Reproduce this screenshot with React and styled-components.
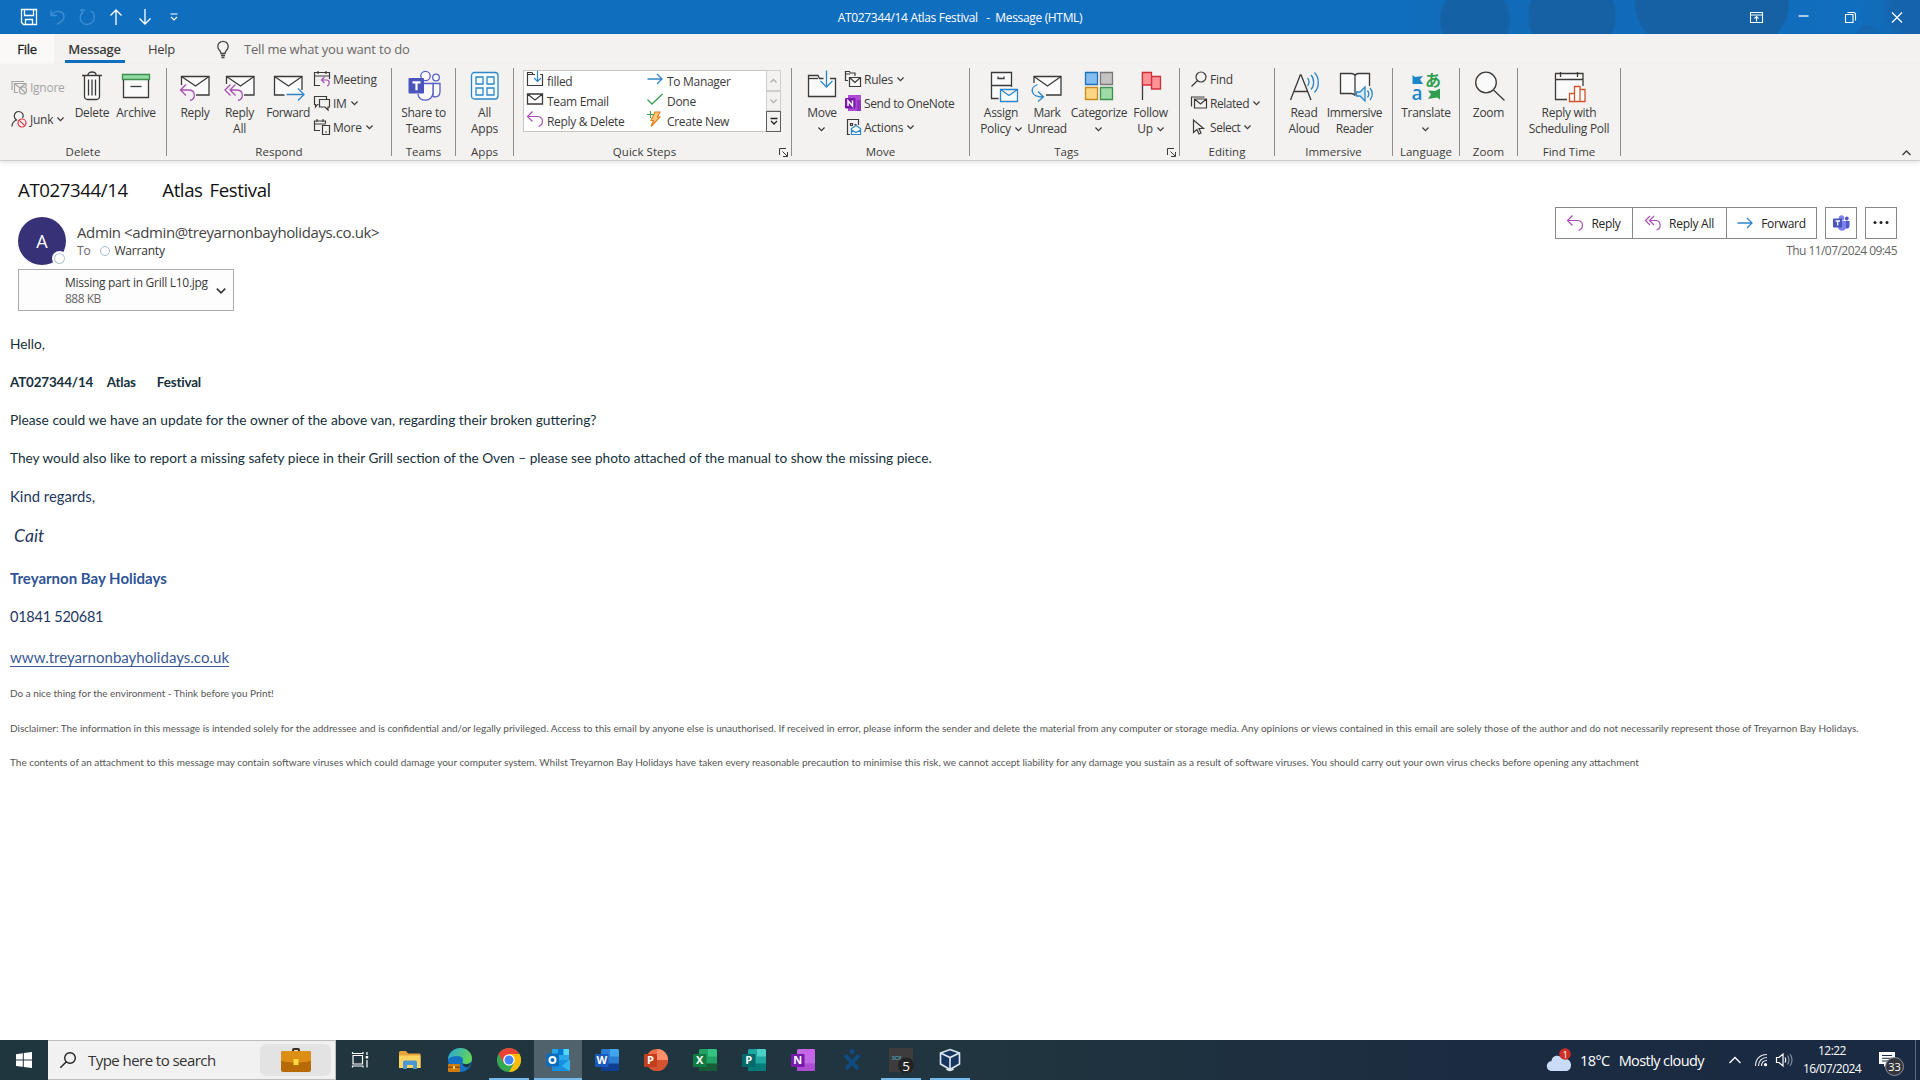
import React from 'react'
import styled, { createGlobalStyle } from 'styled-components'

const GlobalStyle = createGlobalStyle`
  * {
    box-sizing: border-box;
  }
  html, body {
    margin: 0;
    padding: 0;
    overflow: hidden;
  }
  body {
    font-family: 'Open Sans', 'Noto Sans', sans-serif;
    font-size: 12px;
    color: #3b3a39;
    background: #fff;
  }
  svg {
    display: block;
    overflow: visible;
    flex: none;
  }
`

const S = {
  Window: styled.div`
    width: 1920px;
    height: 1080px;
    display: flex;
    flex-direction: column;
    background: #fff;
  `,

  // title bar
  TitleBar: styled.header`
    height: 34px;
    display: grid;
    grid-template-columns: 1fr 300px 1fr;
    align-items: center;
    color: #fff;
    background:
      radial-gradient(circle at 1475px 20px, #1561a6 0 34px, transparent 36px),
      radial-gradient(circle at 1572px 16px, #1561a4 0 42px, transparent 45px),
      radial-gradient(ellipse 78px 56px at 1712px 4px, #1561a3 0 97%, transparent 100%),
      radial-gradient(circle at 1868px 38px, #1566b0 0 12px, transparent 14px),
      radial-gradient(circle at 1912px 10px, #1564ab 0 20px, transparent 30px),
      linear-gradient(90deg, #106ebe 0 1400px, #126ab8 1500px, #106ebe 1860px, #1465ae 1920px);
  `,
  QuickAccess: styled.div`
    display: flex;
    align-items: center;
    gap: 13px;
    padding-left: 21px;
  `,
  WindowTitle: styled.div`
    text-align: center;
    white-space: pre;
    letter-spacing: -0.33px;
  `,
  WindowButtons: styled.div`
    display: flex;
    justify-content: flex-end;
    align-items: center;
    gap: 33px;
    padding-right: 16px;
  `,

  // tabs
  Tabs: styled.nav`
    height: 30px;
    display: flex;
    background: #f3f2f1;
    font-size: 13px;
    letter-spacing: -0.3px;
  `,
  Tab: styled.div`
    width: ${(p) => p.$width}px;
    display: flex;
    flex-direction: column;
    align-items: center;
    line-height: 31px;
    color: ${(p) => (p.$file ? '#201f1e' : '#3b3a39')};
    background: ${(p) => (p.$file ? '#faf9f8' : 'none')};
    font-weight: ${(p) => (p.$active ? 600 : 400)};
    -webkit-text-stroke: ${(p) => (p.$file ? '0.3px #201f1e' : '0')};
    &::after {
      content: '';
      display: ${(p) => (p.$active ? 'block' : 'none')};
      width: 60px;
      height: 3px;
      margin-top: -5px;
      background: #106ebe;
    }
  `,
  TellMe: styled.div`
    display: flex;
    align-items: center;
    gap: 15px;
    padding-left: 29px;
    color: #6a6866;
    letter-spacing: -0.2px;
  `,

  // ribbon
  Ribbon: styled.section`
    height: 97px;
    display: flex;
    align-items: flex-start;
    padding-top: 4px;
    background: #f3f2f1;
    border-bottom: 1px solid #cfcdcb;
    box-shadow: 0 2px 4px rgba(0, 0, 0, 0.1);
  `,
  Group: styled.div`
    position: relative;
    width: ${(p) => p.$width}px;
    height: 88px;
    display: flex;
    flex-direction: column;
    border-right: 1px solid #8f8d8b;
  `,
  GroupBody: styled.div`
    flex: none;
    height: 76px;
    display: flex;
    justify-content: ${(p) => (p.$center ? 'center' : 'flex-start')};
    padding-left: ${(p) => p.$pad || 0}px;
  `,
  GroupLabel: styled.div`
    flex: none;
    text-align: center;
    font-size: 11.5px;
    line-height: 16px;
    letter-spacing: 0.05px;
    padding-right: ${(p) => (p.$launcher ? 16 : 0)}px;
  `,
  Launcher: styled.span`
    position: absolute;
    right: 3px;
    bottom: -1px;
  `,
  Big: styled.div`
    width: ${(p) => p.$width}px;
    display: flex;
    flex-direction: column;
    align-items: center;
    padding-top: 2px;
  `,
  BigLabel: styled.div`
    margin-top: 3px;
    text-align: center;
    white-space: nowrap;
    line-height: 16px;
    letter-spacing: ${(p) => p.$ls ?? -0.27}px;
  `,
  Line: styled.div`
    height: 16px;
    display: flex;
    align-items: center;
    justify-content: center;
    gap: 4px;
  `,
  Column: styled.div`
    width: ${(p) => p.$width}px;
    display: flex;
    flex-direction: column;
    margin-top: -1px;
    padding-top: ${(p) => p.$top || 0}px;
  `,
  Small: styled.div`
    height: ${(p) => p.$height || 24}px;
    display: flex;
    align-items: center;
    gap: 3px;
    white-space: nowrap;
    letter-spacing: ${(p) => p.$ls ?? -0.25}px;
    color: ${(p) => (p.$disabled ? '#a6a4a2' : 'inherit')};
    & > svg:last-child {
      margin-left: 1px;
    }
  `,
  Gallery: styled.div`
    width: 258px;
    height: 62px;
    margin-top: 2px;
    display: flex;
    background: #fff;
    border: 1px solid #c8c6c4;
  `,
  Steps: styled.div`
    flex: 1;
    display: grid;
    grid-template-columns: 120px 1fr;
    grid-auto-rows: 20px;
    padding-left: 3px;
  `,
  Step: styled.div`
    display: flex;
    align-items: center;
    gap: 4px;
    letter-spacing: -0.3px;
    white-space: nowrap;
    & > svg {
      margin-top: -4px;
    }
    & > span {
      padding-top: 1px;
    }
  `,
  Scroller: styled.div`
    width: 15px;
    margin: -1px;
    display: grid;
    grid-template-rows: 21px 20px 21px;
  `,
  ScrollButton: styled.div`
    display: flex;
    align-items: center;
    justify-content: center;
    background: #f3f2f1;
    border: 1px solid ${(p) => (p.$on ? '#605e5c' : '#d0cecc')};
  `,
  Collapse: styled.div`
    flex: 1;
    height: 93px;
    display: flex;
    align-items: flex-end;
    justify-content: flex-end;
    padding: 0 9px 5px 0;
  `,

  // message header
  Header: styled.section`
    display: flex;
    justify-content: space-between;
    padding: 16px 23px 0 18px;
  `,
  Subject: styled.h1`
    margin: 0;
    font-size: 18.67px;
    font-weight: 400;
    line-height: 26px;
    letter-spacing: -0.42px;
    word-spacing: 2.5px;
    color: #111;
    white-space: pre;
  `,
  Sender: styled.div`
    display: flex;
    gap: 11px;
    margin-top: 14px;
  `,
  Avatar: styled.div`
    position: relative;
    width: 48px;
    height: 48px;
    display: flex;
    align-items: center;
    justify-content: center;
    border-radius: 50%;
    font-size: 18px;
    color: #fff;
    background: #373277;
  `,
  Presence: styled.span`
    position: absolute;
    right: -1px;
    bottom: -1px;
    width: 15px;
    height: 15px;
    border: 2px solid #fff;
    border-radius: 50%;
    background: #fff;
    box-shadow: inset 0 0 0 1px #a3bcc9;
  `,
  From: styled.div`
    font-size: 15px;
    line-height: 20px;
    padding-top: 5px;
    letter-spacing: -0.39px;
    white-space: nowrap;
    color: #444;
  `,
  To: styled.div`
    display: flex;
    align-items: center;
    line-height: 18px;
    letter-spacing: -0.2px;
    color: #666;
  `,
  Ring: styled.i`
    width: 10px;
    height: 10px;
    margin: 0 4px 0 10px;
    border: 1px solid #a3bcc9;
    border-radius: 50%;
  `,
  Recipient: styled.span`
    color: #333;
  `,
  Attachment: styled.div`
    width: 216px;
    height: 42px;
    margin-top: 4px;
    display: flex;
    align-items: center;
    justify-content: space-between;
    padding: 1px 7px 0 46px;
    line-height: 16px;
    letter-spacing: -0.28px;
    white-space: nowrap;
    background: #fdfdfd;
    border: 1px solid #ababab;
  `,
  FileSize: styled.div`
    color: #666;
    letter-spacing: -0.5px;
  `,
  Actions: styled.div`
    display: flex;
    flex-direction: column;
    align-items: flex-end;
    padding-top: 30px;
  `,
  ActionRow: styled.div`
    display: flex;
    height: 32px;
    letter-spacing: -0.28px;
    color: #252423;
  `,
  Action: styled.div`
    width: ${(p) => p.$width}px;
    display: flex;
    align-items: center;
    justify-content: center;
    gap: 8px;
    border: 1px solid #8a8886;
    margin-left: ${(p) => p.$gap ?? -1}px;
    white-space: nowrap;
  `,
  Date: styled.div`
    margin-top: 3px;
    line-height: 18px;
    letter-spacing: -0.55px;
    color: #666;
  `,

  // message body
  Body: styled.article`
    flex: 1;
    padding: 23px 10px 0;
    font-family: Lato, 'Open Sans', sans-serif;
    white-space: pre;
  `,
  P: styled.p`
    margin: 0;
    height: ${(p) => p.$height || 38}px;
    line-height: 20px;
    font-size: ${(p) => p.$size || 13.7}px;
    font-weight: ${(p) => (p.$bold ? 700 : 400)};
    font-style: ${(p) => (p.$italic ? 'italic' : 'normal')};
    letter-spacing: ${(p) => p.$ls || 0}px;
    word-spacing: ${(p) => p.$ws || 0}px;
    color: ${(p) => p.$color || '#16303c'};
  `,
  Link: styled.a`
    color: #3a5a96;
    text-decoration: underline;
    text-underline-offset: 3px;
  `,

  // taskbar
  Taskbar: styled.footer`
    height: 40px;
    display: flex;
    color: #fff;
    background: linear-gradient(90deg, #20363f 0, #20353f 980px, #1b2b41 1500px, #1a2a42 1920px);
  `,
  Start: styled.div`
    width: 48px;
    display: flex;
    align-items: center;
    justify-content: center;
  `,
  Search: styled.div`
    width: 288px;
    display: flex;
    align-items: center;
    gap: 12px;
    padding: 0 4px 0 12px;
    font-size: 15px;
    letter-spacing: -0.55px;
    color: #333;
    background: #f1f1f1;
    border: 1px solid #bdbdbd;
    border-left: 0;
  `,
  Highlight: styled.div`
    width: 71px;
    height: 32px;
    margin-left: auto;
    display: flex;
    justify-content: center;
    border-radius: 7px;
    background: #e3e3e3;
  `,
  Task: styled.div`
    width: ${(p) => p.$width || 49}px;
    display: flex;
    flex-direction: column;
    align-items: center;
    padding-top: 8px;
    background: ${(p) => (p.$active ? '#50626b' : 'none')};
    &::after {
      content: '';
      display: ${(p) => (p.$running ? 'block' : 'none')};
      width: ${(p) => (p.$active ? 48 : 40)}px;
      height: 2px;
      margin-top: 6px;
      background: #76b9ed;
    }
  `,
  Tray: styled.div`
    flex: 1;
    display: flex;
    align-items: center;
    justify-content: flex-end;
    padding-right: 4px;
  `,
  Weather: styled.div`
    display: flex;
    align-items: center;
    gap: 9px;
    font-size: 14.5px;
    letter-spacing: -0.58px;
    margin-right: 25px;
    white-space: nowrap;
  `,
  TrayIcons: styled.div`
    display: flex;
    align-items: center;
    gap: 8px;
    & > svg:first-child {
      margin-right: 5px;
    }
  `,
  Clock: styled.div`
    width: 74px;
    margin: 0 2px 0 3px;
    text-align: center;
    line-height: 18px;
    letter-spacing: -0.55px;
  `,
  Notice: styled.div`
    width: 45px;
    height: 40px;
    border-right: 1px solid #5c6b7c;
    padding: 11px 0 0 8px;
  `,
}

const INK = '#3b3a39'
const BLUE = '#2e86c8'
const PURPLE = '#a94fb5'

const Icon = ({ w = 32, h = w, s = INK, sw = 1.3, children }) => (
  <svg width={w} height={h} viewBox={`0 0 ${w} ${h}`} fill="none" stroke={s} strokeWidth={sw}>
    {children}
  </svg>
)

const Chevron = ({ c = INK, w = 7 }) => (
  <svg width={w} height={w / 2 + 1} viewBox="0 0 8 5" fill="none" stroke={c} strokeWidth="1.4">
    <path d="M0.5 0.5 4 4 7.5 0.5" />
  </svg>
)

/* big ribbon icons */
const Trash = () => (
  <Icon>
    <path d="M8.5 5.5v21a3 3 0 0 0 3 3h9a3 3 0 0 0 3-3v-21" fill="#fafafa" />
    <path d="M6 5.5h20M12 5c0-4 8-4 8 0M12.5 9.5v16M16 9.5v16M19.5 9.5v16" />
  </Icon>
)
const Archive = () => (
  <Icon>
    <path d="M3.5 9.5v18h25v-18" fill="#fafafa" />
    <path d="M2.5 4.5h27v5h-27z" fill="#92dba0" stroke="#3f8f50" />
    <path d="M10.5 16.5h11" />
  </Icon>
)
const Reply = () => (
  <Icon>
    <path d="M2.5 15V6.500h27.500v18.500H17" fill="#fafafa" />
    <path d="M2.500 6.500 16.500 16 30 6.500" />
    <path d="M7 14.500 1.500 20 7 25.500M2 20h7.500c7.500 0 7.500 9 1.500 10.500" stroke={PURPLE} />
  </Icon>
)
const ReplyAll = () => (
  <Icon>
    <path d="M2.500 14V6.500h27.500v18.500H20" fill="#fafafa" />
    <path d="M2.500 6.500 16.500 16 30 6.500" />
    <path d="M6.500 14.500 1 20l5.500 5.500M11.500 14.500 6 20l5.500 5.500M6.500 20h6c7.500 0 7.500 9 1.500 10.500" stroke={PURPLE} />
  </Icon>
)
const Forward = () => (
  <Icon>
    <path d="M12.500 25h-10V6.500H30V20" fill="#fafafa" />
    <path d="M2.500 6.500 16.500 16 30 6.500" />
    <path d="M14.500 24.500H32M26 18.500l6 6-6 6" stroke={BLUE} />
  </Icon>
)
const Teams = () => (
  <Icon s="#5b5fc7">
    <circle cx="17.500" cy="6" r="4.700" fill="#fafafa" />
    <circle cx="28" cy="7.500" r="3.300" fill="#fafafa" />
    <path d="M25 13.500h7v8.500c0 4-3 5.500-7 4.500z" fill="#fafafa" />
    <path d="M11.500 13.500H25v9c0 10-15 10-15 1.500" fill="#fafafa" />
    <rect x="0.500" y="8" width="15.500" height="15.500" rx="1" fill="#4b53bc" stroke="none" />
    <path d="M4.500 12.300h8M8.500 12.300v8" stroke="#fff" strokeWidth="2.200" />
  </Icon>
)
const Apps = () => (
  <Icon s={BLUE}>
    <rect x="2.500" y="2.500" width="26.500" height="26.500" rx="3" fill="#f5fbff" />
    <path d="M7 7h7v7H7zM18 7h7v7h-7zM7 18h7v7H7zM18 18h7v7h-7z" />
  </Icon>
)
const Move = () => (
  <Icon>
    <path d="M17.500 8.500h-4l-1.500-3H2.500v21h27v-18H24" fill="#fafafa" />
    <path d="M2.500 8.500H12" />
    <path d="M20.500 0.500V17M14.500 11l6 6 6-6" stroke={BLUE} />
  </Icon>
)
const Assign = () => (
  <Icon>
    <path d="M13.500 28.500h-7v-26h20V17" fill="#fafafa" />
    <path d="M6.500 15.500h20M13 6.500v2h6v-2" />
    <path d="M15.500 19.500h17v12h-17zl8.500 6 8.500-6" fill="#f5fbff" stroke={BLUE} />
  </Icon>
)
const Unread = () => (
  <Icon>
    <path d="M3 13V6.500h27v18.500H15" fill="#fafafa" />
    <path d="M3 6.500 16.500 16 30 6.500" />
    <path d="M6.500 14.500c-8 3-7.500 12.500 5.500 12.500M7 21.500l5.500 5.500-5.500 4.500" stroke={BLUE} />
  </Icon>
)
const Categorize = () => (
  <Icon>
    <path d="M2.500 2.500h12v12h-12z" fill="#84bdf0" stroke="#1f72b8" />
    <path d="M17.500 2.500h12v12h-12z" fill="#c5c3c1" stroke="#7a7876" />
    <path d="M2.500 17.500h12v12h-12z" fill="#fbd684" stroke="#c98a1c" />
    <path d="M17.500 17.500h12v12h-12z" fill="#9fdba5" stroke="#3f9150" />
  </Icon>
)
const Flag = () => (
  <Icon>
    <path d="M7.500 30V2.500" />
    <path d="M16.500 6.500h9v12.500h-9z" fill="#ff9297" stroke="#cf3038" />
    <path d="M7.500 2.500h9v12.500h-9z" fill="#ff9297" stroke="#cf3038" />
  </Icon>
)
const ReadAloud = () => (
  <Icon>
    <path d="M2.500 30 12.300 5h.8L23 30M6 21.500h13.500" />
    <path d="M19.500 8c2 2 2 6 0 8M23 5c3.500 3.500 3.500 11 0 14.500M26.500 2.500c5 5 5 15 0 20" stroke={BLUE} />
  </Icon>
)
const Immersive = () => (
  <Icon>
    <path d="M16 25.500c-1-1.500-2-2-4-2H1.500v-20H12c2 0 4 1 4 3 0-2 2-3 4-3h10.500V16" fill="#fafafa" />
    <path d="M16 6.500v19" />
    <path d="M17.500 22h3.500l5-5v14l-5-5h-3.500z" fill="#d6ecfb" stroke={BLUE} />
    <path d="M28.500 20.500c1.500 2 1.500 5 0 7M31 18c3 3.500 3 8.500 0 12" stroke={BLUE} />
  </Icon>
)
const Translate = () => (
  <Icon>
    <path d="M2.500 5 5 7l8-1-3 3.500 3 4.500H2.500z" fill="#1b87c9" stroke="none" />
    <path d="M30 18.500v11l-3-2-9 1.500 3-4.500-3-4 7 .5z" fill="#2f9e4f" stroke="none" />
    <text x="15" y="16" fontSize="16" fontWeight="700" fontFamily="'Noto Sans CJK JP', sans-serif" fill="#2f9e4f" stroke="none">あ</text>
    <text x="1.500" y="30" fontSize="19" fontWeight="600" fontFamily="'Open Sans', sans-serif" fill="#1b87c9" stroke="none">a</text>
  </Icon>
)
const ZoomGlass = () => (
  <Icon>
    <circle cx="13" cy="12.500" r="10.300" fill="#fafafa" />
    <path d="M20.500 20 31.500 30.500" />
  </Icon>
)
const Poll = () => (
  <Icon>
    <path d="M14 29.500H2.500v-26H30V16" fill="#fafafa" />
    <path d="M2.500 9.500H30M7.500 2v5M24.500 2v5" />
    <path d="M16.500 31.500v-8h5v8zM21.500 31.500v-15h5.500v15zM27 31.500v-12h5v12z" fill="#fff" stroke="#d2532a" />
  </Icon>
)

/* small ribbon icons */
const Ignore = () => (
  <Icon w={16} s="#a6a4a2" sw={1.2}>
    <path d="M7 13.500H3.500V4.500h11.500V8M3.500 4.500 9 9l5-4M1 11V2.500h12" />
    <circle cx="12" cy="11.500" r="3.500" />
    <path d="m9.500 9 5 5" />
  </Icon>
)
const Junk = () => (
  <Icon w={16} sw={1.2}>
    <path d="M1 15.500c0-4 2-5.500 4.500-6.500C1.500 6 3.500.5 7.500.5c4 0 6 4 4 6.500" />
    <circle cx="11" cy="12" r="4" stroke="#d9363e" />
    <path d="m8.300 9.300 5.400 5.400" stroke="#d9363e" />
  </Icon>
)
const Meeting = () => (
  <Icon w={16} sw={1.2}>
    <path d="M6 14.500H.5v-13h15V8M.5 5h15M4 0v3M12 0v3" />
    <path d="m10.500 6-3 3 3 3M8 9h4.500c3.500 0 3.500 5 .5 6" stroke={PURPLE} />
  </Icon>
)
const Chat = () => (
  <Icon w={16} sw={1.2}>
    <path d="M4.500 9.500H3.500L1.500 12V9.500h-1v-8h12V4" />
    <path d="M5.500 4.500h10v7.500H14v3L11 12H5.500z" />
  </Icon>
)
const MoreIcon = () => (
  <Icon w={16} sw={1.2}>
    <path d="M6 11.500H.5V2h11v2.500M.5 5h11M3 0v3M9 0v3M8.500 6.500h7v9h-7zM11 13h2" />
  </Icon>
)
const Rules = () => (
  <Icon w={16} sw={1.2}>
    <path d="M3 9.500H.5v-9h4l1 1.500H10V5M.5 3H5" />
    <path d="M4.500 6.500h11v9h-11zl5.500 5 5.500-5" fill="#fafafa" />
  </Icon>
)
const OneNoteSmall = () => (
  <Icon w={16}>
    <rect x="3" y="0" width="13" height="16" fill="#ae4bd5" stroke="none" />
    <rect x="12" y="5" width="4" height="11" fill="#9332bf" stroke="none" />
    <rect x="0" y="3" width="10.500" height="10.500" rx="1" fill="#7719aa" stroke="none" />
    <path d="M3 11V5.800l4.500 5.200V5.500" stroke="#fff" strokeWidth="1.500" />
  </Icon>
)
const ActionsIcon = () => (
  <Icon w={16} sw={1.2}>
    <path d="M5 15.500H2.500V.5h11V6M5.500 4.500h2v2h-2zM9.500 5.500h2" />
    <path d="M6.500 15.500h9v-6L11 6.500 6.500 9.500zM6.500 11l4.500 2.500 4.500-2.500" fill="#f5fbff" stroke={BLUE} />
  </Icon>
)
const Find = () => (
  <Icon w={16} sw={1.2}>
    <circle cx="10" cy="6" r="5" />
    <path d="M6.500 9.500.5 15.500" />
  </Icon>
)
const Related = () => (
  <Icon w={16} sw={1.2}>
    <path d="M3.500 4h12v9h-12zL9.500 9l6-5M.5 11.500V2h13" />
  </Icon>
)
const Select = () => (
  <Icon w={16} sw={1.2}>
    <path d="M2.500 1v12.500L6 10.500l2 4.500 2-1-2-4.500h4.500z" />
  </Icon>
)
const FolderStep = () => (
  <Icon w={16} sw={1.2}>
    <path d="M8 3.500H6l-1-2H.5v13h15v-11H13M.5 3.500H6" />
    <path d="M10.500 0v10.500M7 7l3.500 3.500L14 7" stroke={BLUE} />
  </Icon>
)
const MailStep = () => (
  <Icon w={16} sw={1.3}>
    <path d="M.5 3h15v10H.5zL8 9l7.500-6" />
  </Icon>
)
const ReplyArrow = () => (
  <Icon w={16} s={PURPLE} sw={1.2}>
    <path d="M5.500.5.5 5.500l5 5M1 5.500h9c7 0 7 8 1.500 10" />
  </Icon>
)
const ReplyAllArrow = () => (
  <Icon w={16} s={PURPLE} sw={1.2}>
    <path d="M5 1 .5 5.500 5 10M9 1 4.500 5.500 9 10M5 5.500h5.500c6 0 6 8 1 9.500" />
  </Icon>
)
const RightArrow = () => (
  <Icon w={16} s={BLUE} sw={1.3}>
    <path d="M.5 8h14.500M10 3l5 5-5 5" />
  </Icon>
)
const Check = () => (
  <Icon w={16} s="#3d9a50" sw={1.3}>
    <path d="M.5 8.500 5 13 15.500 3" />
  </Icon>
)
const Bolt = () => (
  <Icon w={16} s="#e07b1a" sw={1.1}>
    <path d="M8 1h5L10.500 6H13L4 15.500l2.500-6H4z" fill="#fbc97a" />
    <path d="M3.500 0v7M0 3.500h7" stroke="#3d9a50" />
  </Icon>
)

const Corner = () => (
  <Icon w={9} sw={1}>
    <path d="M.5 7V.5H7M3.500 3.500l4.500 4.500M8.500 4v4.500H4" />
  </Icon>
)

/* taskbar icons */
const OfficeTile = ({ letter, light, mid, dark, box }) => (
  <Icon w={24}>
    <g stroke="none">
      <rect x="6" y="1" width="18" height="22" rx="1.500" fill={mid} />
      <path d="M15 1h7.500Q24 1 24 2.500v6h-9z" fill={light} />
      <path d="M6 15.500h18v6q0 1.500-1.500 1.500h-15Q6 23 6 21.500z" fill={dark} />
      <rect x="0" y="6" width="13.500" height="13" rx="1" fill={box} />
      <text x="6.700" y="16.300" textAnchor="middle" fontSize="11" fontWeight="700" fill="#fff">{letter}</text>
    </g>
  </Icon>
)
const Explorer = () => (
  <Icon w={24}>
    <g stroke="none">
      <path d="M1 4.500Q1 3 2.500 3H8l2 2.500h11.500q1 0 1 1V20H1z" fill="#e8a33d" />
      <path d="M1 7.500h21.500V20H1z" fill="#fcd462" />
      <path d="M5 21v-7q0-1.500 1.500-1.500h11q1.500 0 1.500 1.500v7h-4v-4H9v4z" fill="#4a98d6" />
    </g>
  </Icon>
)
const Edge = () => (
  <Icon w={24}>
    <defs>
      <linearGradient id="edge" x1="0" y1="0" x2="1" y2="0.300">
        <stop offset="0" stopColor="#2aa7e0" />
        <stop offset="1" stopColor="#5fd35a" />
      </linearGradient>
    </defs>
    <g stroke="none">
      <circle cx="12" cy="12" r="12" fill="#1571c4" />
      <path d="M0 11C1 3.500 7 0 12.500 0 19 0 24 5 24 10.500c0 3.500-2.500 5.500-6 5.500-2.500 0-4-1-3.500-2 1.500-2 0-6-5-6-4 0-7.500 1-9.500 3z" fill="url(#edge)" />
      <path d="M14.500 15.500c3.500 1.500 7 .5 9.500-1.500-1.500 2-2 3.500-3.500 5-2.500 1-5.500-.5-6-3.500z" fill="#20363f" />
      <rect x="0" y="16" width="12" height="8" rx="1" fill="#d07c0e" />
      <path d="M0 18.500h12v1.500H0z" fill="#8f4d05" />
      <path d="M5 18h2v3H5z" fill="#ffd24a" />
    </g>
  </Icon>
)
const Chrome = () => (
  <Icon w={24}>
    <g stroke="none">
      <circle cx="12" cy="12" r="12" fill="#34a853" />
      <path d="M1.600 6A12 12 0 0 1 22.400 6H12l-5.200 9z" fill="#ea4335" />
      <path d="M22.400 6A12 12 0 0 1 12 24l5.200-9L12 6z" fill="#fbbc05" />
      <circle cx="12" cy="12" r="5.800" fill="#fff" />
      <circle cx="12" cy="12" r="4.500" fill="#4285f4" />
    </g>
  </Icon>
)
const Outlook = () => (
  <Icon w={24}>
    <g stroke="none">
      <rect x="6" y="1" width="17" height="14" rx="1" fill="#28a8ea" />
      <path d="M12 1h5.500v6H12z" fill="#0078d4" />
      <path d="M17.500 1H22q1 0 1 1v5h-5.500z" fill="#50d9ff" />
      <path d="M6 12h18v10q0 1-1 1H7q-1 0-1-1z" fill="#1490df" />
      <path d="M24 11.500 9 23h13.500q1.500 0 1.500-1.500z" fill="#35b8f1" />
      <path d="M6 12l17.500 11H7.500Q6 23 6 21.500z" fill="#1a8fdd" />
      <rect x="0" y="5.500" width="13" height="13" rx="1" fill="#0f6cbd" />
    </g>
    <circle cx="6.500" cy="12" r="3" stroke="#fff" strokeWidth="2" />
  </Icon>
)
const PowerPoint = () => (
  <Icon w={24}>
    <g stroke="none">
      <circle cx="13" cy="12" r="11" fill="#ed6c47" />
      <path d="M13 1a11 11 0 0 1 11 11H13z" fill="#ff8f6b" />
      <path d="M2 12h22a11 11 0 0 1-22 0z" fill="#d35230" />
      <rect x="0" y="6" width="13" height="13" rx="1" fill="#c43e1c" />
      <text x="6.500" y="16.300" textAnchor="middle" fontSize="11" fontWeight="700" fill="#fff">P</text>
    </g>
  </Icon>
)
const Crossed = () => (
  <Icon w={24} s="#114a80" sw={4}>
    <path d="M5 7l13 14M19 7 6 21" />
    <circle cx="12" cy="3.500" r="2.500" fill="#114a80" stroke="none" />
  </Icon>
)
const Badge = () => (
  <Icon w={24}>
    <g stroke="none">
      <rect width="24" height="24" fill="#3e3c3c" />
      <text x="2.500" y="12" fontSize="6" fontWeight="700" letterSpacing="-0.5" fill="#4a93a8">3CX</text>
      <circle cx="17" cy="17.500" r="8" fill="#242424" />
      <text x="17" y="22.500" textAnchor="middle" fontSize="13.500" fill="#fff">5</text>
    </g>
  </Icon>
)
const Cube = () => (
  <Icon w={24} s="#dfe8f2" sw={1.6}>
    <path d="M12 1.500 21.500 5v11L12 21.500 2.500 16V5z" fill="#16365f" />
    <path d="M2.500 5 12 9.500 21.500 5M12 9.500v12" />
    <path d="M8.500 21q3.500 3 7 0" />
  </Icon>
)
const TaskView = () => (
  <Icon w={24} s="#fff" sw={1.2}>
    <path d="M4 7.500h9.500v8.500H4zM3.500 4v1.500H14V4M3.500 19.500V18H14v1.500M18 4v3M18 12v7.500" />
    <path d="M16.700 8h2.500v2.500h-2.500z" fill="#fff" stroke="none" />
  </Icon>
)

const Label = ({ lines, drop, ls }) => (
  <S.BigLabel $ls={ls}>
    {lines.map((line, i) => (
      <S.Line key={line}>
        {line}
        {drop && i === lines.length - 1 && <Chevron />}
      </S.Line>
    ))}
  </S.BigLabel>
)

const BigButton = ({ icon, width, lines, drop, ls }) => (
  <S.Big $width={width}>
    {icon}
    <Label lines={lines} drop={drop} ls={ls} />
  </S.Big>
)

const SmallButton = ({ icon, text, drop, disabled, height, ls }) => (
  <S.Small $height={height} $disabled={disabled} $ls={ls}>
    {icon}
    <span>{text}</span>
    {drop && <Chevron />}
  </S.Small>
)

const Group = ({ width, label, pad, center, launcher, children }) => (
  <S.Group $width={width}>
    <S.GroupBody $pad={pad} $center={center}>{children}</S.GroupBody>
    <S.GroupLabel $launcher={launcher}>{label}</S.GroupLabel>
    {launcher && <S.Launcher><Corner /></S.Launcher>}
  </S.Group>
)

const steps = [
  [<FolderStep />, 'filled'],
  [<RightArrow />, 'To Manager'],
  [<MailStep />, 'Team Email'],
  [<Check />, 'Done'],
  [<ReplyArrow />, 'Reply & Delete'],
  [<Bolt />, 'Create New'],
]

const TitleBar = () => (
  <S.TitleBar>
    <S.QuickAccess>
      <Icon w={16} s="#fff"><path d="M.5.5h15v15h-13l-2-2zM3.500.5v6h9v-6M4.500 15.500v-5h7v5" /></Icon>
      <Icon w={16} s="#3f8fd4"><path d="M1 1v5.500h6M1.500 6C6 0 14 2 14 8c0 4-4 5-7 7.500" /></Icon>
      <Icon w={16} s="#3f8fd4"><path d="M3 1v4.500M1 1h5M4 3C-1 7 1 15 8 15.500 16 15 18 5 11.500 2" /></Icon>
      <Icon w={16} s="#fff"><path d="M8 16V1M2.500 6.500 8 1l5.500 5.500" /></Icon>
      <Icon w={16} s="#fff"><path d="M8 0v15M2.500 9.500 8 15l5.500-5.500" /></Icon>
      <Icon w={16} s="#fff" sw={1.2}><path d="M4.500 5h7M5 8l3 3 3-3" /></Icon>
    </S.QuickAccess>
    <S.WindowTitle>{'AT027344/14 Atlas Festival   -  Message (HTML)'}</S.WindowTitle>
    <S.WindowButtons>
      <Icon w={13} h={11} s="#fff" sw={1.1}><path d="M.5.5h12v10H.5zM.5 3h12M6.500 9.500V4.500M4.500 6.500l2-2 2 2" /></Icon>
      <Icon w={14} h={12} s="#fff"><path d="M2.500 5h10" /></Icon>
      <Icon w={14} h={11} s="#fff" sw={1.1}><path d="M2.500 2.500h7.500v8H2.500zM4.500.5h6q2 0 2 2v6" /></Icon>
      <Icon w={14} h={11} s="#fff" sw={1.2}><path d="M2 .5 12 10.500M12 .5 2 10.500" /></Icon>
    </S.WindowButtons>
  </S.TitleBar>
)

const Ribbon = () => (
  <S.Ribbon>
    <Group width={167} label="Delete" pad={11}>
      <S.Column $width={60} $top={4}>
        <SmallButton icon={<Ignore />} text="Ignore" disabled height={32} />
        <SmallButton icon={<Junk />} text="Junk" drop height={32} />
      </S.Column>
      <BigButton icon={<Trash />} width={42} lines={['Delete']} />
      <BigButton icon={<Archive />} width={46} lines={['Archive']} />
    </Group>
    <Group width={225} label="Respond" pad={6}>
      <BigButton icon={<Reply />} width={44} lines={['Reply']} />
      <BigButton icon={<ReplyAll />} width={45} lines={['Reply', 'All']} />
      <BigButton icon={<Forward />} width={52} lines={['Forward']} ls={-0.4} />
      <S.Column $width={74}>
        <SmallButton icon={<Meeting />} text="Meeting" />
        <SmallButton icon={<Chat />} text="IM" drop />
        <SmallButton icon={<MoreIcon />} text="More" drop />
      </S.Column>
    </Group>
    <Group width={64} label="Teams" center>
      <BigButton icon={<Teams />} width={50} lines={['Share to', 'Teams']} />
    </Group>
    <Group width={58} label="Apps" center>
      <BigButton icon={<Apps />} width={50} lines={['All', 'Apps']} />
    </Group>
    <Group width={278} label="Quick Steps" pad={9} launcher>
      <S.Gallery>
        <S.Steps>
          {steps.map(([icon, text]) => (
            <S.Step key={text}>
              {icon}
              <span>{text}</span>
            </S.Step>
          ))}
        </S.Steps>
        <S.Scroller>
          <S.ScrollButton><Icon w={7} h={4} s="#b0aeac"><path d="M.5 3.500l3-3 3 3" /></Icon></S.ScrollButton>
          <S.ScrollButton><Chevron c="#b0aeac" /></S.ScrollButton>
          <S.ScrollButton $on><Icon w={8} h={7} s="#222"><path d="M.5.5h7M1 3l3 3 3-3" /></Icon></S.ScrollButton>
        </S.Scroller>
      </S.Gallery>
    </Group>
    <Group width={178} label="Move" pad={7}>
      <BigButton icon={<Move />} width={46} lines={['Move', '']} drop />
      <S.Column $width={120}>
        <SmallButton icon={<Rules />} text="Rules" drop />
        <SmallButton icon={<OneNoteSmall />} text="Send to OneNote" ls={-0.4} />
        <SmallButton icon={<ActionsIcon />} text="Actions" drop />
      </S.Column>
    </Group>
    <Group width={210} label="Tags" pad={8} launcher>
      <BigButton icon={<Assign />} width={46} lines={['Assign', 'Policy']} drop />
      <BigButton icon={<Unread />} width={46} lines={['Mark', 'Unread']} ls={-0.4} />
      <BigButton icon={<Categorize />} width={58} lines={['Categorize', '']} drop />
      <BigButton icon={<Flag />} width={45} lines={['Follow', 'Up']} drop />
    </Group>
    <Group width={95} label="Editing" pad={11}>
      <S.Column $width={80}>
        <SmallButton icon={<Find />} text="Find" />
        <SmallButton icon={<Related />} text="Related" drop ls={-0.45} />
        <SmallButton icon={<Select />} text="Select" drop ls={-0.45} />
      </S.Column>
    </Group>
    <Group width={118} label="Immersive" pad={7}>
      <BigButton icon={<ReadAloud />} width={44} lines={['Read', 'Aloud']} />
      <BigButton icon={<Immersive />} width={57} lines={['Immersive', 'Reader']} ls={-0.35} />
    </Group>
    <Group width={67} label="Language" center>
      <BigButton icon={<Translate />} width={50} lines={['Translate', '']} drop />
    </Group>
    <Group width={58} label="Zoom" center>
      <BigButton icon={<ZoomGlass />} width={50} lines={['Zoom']} />
    </Group>
    <Group width={103} label="Find Time" center>
      <BigButton icon={<Poll />} width={90} lines={['Reply with', 'Scheduling Poll']} />
    </Group>
    <S.Collapse>
      <Icon w={9} h={6}><path d="M.5 5 4.500 1l4 4" /></Icon>
    </S.Collapse>
  </S.Ribbon>
)

const MessageHeader = () => (
  <S.Header>
    <div>
      <S.Subject>{'AT027344/14     Atlas Festival'}</S.Subject>
      <S.Sender>
        <S.Avatar>A<S.Presence /></S.Avatar>
        <div>
          <S.From>{'Admin <admin@treyarnonbayholidays.co.uk>'}</S.From>
          <S.To>To<S.Ring /><S.Recipient>Warranty</S.Recipient></S.To>
        </div>
      </S.Sender>
      <S.Attachment>
        <div>
          <div>Missing part in Grill L10.jpg</div>
          <S.FileSize>888 KB</S.FileSize>
        </div>
        <Chevron w={10} />
      </S.Attachment>
    </div>
    <S.Actions>
      <S.ActionRow>
        <S.Action $width={78}><ReplyArrow />Reply</S.Action>
        <S.Action $width={95}><ReplyAllArrow />Reply All</S.Action>
        <S.Action $width={91}><RightArrow />Forward</S.Action>
        <S.Action $width={32} $gap={8}>
          <Icon w={16}>
            <g stroke="none">
              <circle cx="8.500" cy="3" r="2.700" fill="#7b83eb" />
              <circle cx="13.800" cy="3.500" r="1.900" fill="#5059c9" />
              <path d="M11 6h5.500v5c0 3-4 3.500-5.500 1z" fill="#5059c9" />
              <path d="M5 6h8v6c0 5-8 5-8 0z" fill="#7b83eb" />
              <rect x="0" y="3.500" width="9" height="9" rx="1" fill="#4b53bc" />
            </g>
            <path d="M2.500 6h4.500M4.700 6v4.500" stroke="#fff" />
          </Icon>
        </S.Action>
        <S.Action $width={32} $gap={8}>
          <Icon w={16} h={4} s="none">
            <circle cx="2" cy="1.500" r="1.500" fill="#222" />
            <circle cx="8" cy="1.500" r="1.500" fill="#222" />
            <circle cx="14" cy="1.500" r="1.500" fill="#222" />
          </Icon>
        </S.Action>
      </S.ActionRow>
      <S.Date>Thu 11/07/2024 09:45</S.Date>
    </S.Actions>
  </S.Header>
)

const MessageBody = () => (
  <S.Body>
    <S.P>Hello,</S.P>
    <S.P $bold $size={13.4} $ls={-0.15} $ws={0.4}>{'AT027344/14    Atlas      Festival'}</S.P>
    <S.P $size={13.79}>Please could we have an update for the owner of the above van, regarding their broken guttering?</S.P>
    <S.P $size={13.65}>They would also like to report a missing safety piece in their Grill section of the Oven – please see photo attached of the manual to show the missing piece.</S.P>
    <S.P $size={14.85} $color="#24375d" $height={40}>Kind regards,</S.P>
    <S.P $size={17.6} $italic $color="#24375d" $height={42}>{' Cait'}</S.P>
    <S.P $size={15} $bold $color="#2f5496" $height={39}>Treyarnon Bay Holidays</S.P>
    <S.P $size={14.5} $ls={-0.25} $color="#1f3864" $height={40}>01841 520681</S.P>
    <S.P $size={15.05} $height={36}><S.Link>www.treyarnonbayholidays.co.uk</S.Link></S.P>
    <S.P $size={9.95} $color="#555" $height={34.5}>Do a nice thing for the environment - Think before you Print!</S.P>
    <S.P $size={10.01} $color="#555" $height={34.5}>Disclaimer: The information in this message is intended solely for the addressee and is confidential and/or legally privileged. Access to this email by anyone else is unauthorised. If received in error, please inform the sender and delete the material from any computer or storage media. Any opinions or views contained in this email are solely those of the author and do not necessarily represent those of Treyarnon Bay Holidays.</S.P>
    <S.P $size={9.99} $color="#555" $height={34}>The contents of an attachment to this message may contain software viruses which could damage your computer system. Whilst Treyarnon Bay Holidays have taken every reasonable precaution to minimise this risk, we cannot accept liability for any damage you sustain as a result of software viruses. You should carry out your own virus checks before opening any attachment</S.P>
  </S.Body>
)

const Taskbar = () => (
  <S.Taskbar>
    <S.Start>
      <Icon w={16}>
        <path d="M0 2.200 6.800 1.300v6.300H0zM7.800 1.100 16 0v7.600H7.800zM0 8.500h6.800v6.300L0 13.900zM7.800 8.500H16V16l-8.200-1.100z" fill="#fff" stroke="none" />
      </Icon>
    </S.Start>
    <S.Search>
      <Icon w={16} s="#222" sw={1.4}>
        <circle cx="10" cy="6" r="5.300" />
        <path d="M6.300 9.700.3 15.700" />
      </Icon>
      Type here to search
      <S.Highlight>
        <Icon w={32} h={32}>
          <g stroke="none">
            <path d="M12 8V6q0-2 2-2h4q2 0 2 2v2h-2V6h-4v2z" fill="#3a2b20" />
            <rect x="1" y="7" width="30" height="21" rx="2" fill="#b96a08" />
            <path d="M1 9q0-2 2-2h26q2 0 2 2v8q-15 3-30 0z" fill="#dd8f15" />
            <rect x="13.500" y="15" width="5" height="6" fill="#ffd83d" />
          </g>
        </Icon>
      </S.Highlight>
    </S.Search>
    <S.Task $width={49}><TaskView /></S.Task>
    <S.Task $width={50}><Explorer /></S.Task>
    <S.Task><Edge /></S.Task>
    <S.Task $width={50} $running><Chrome /></S.Task>
    <S.Task $width={48} $running $active><Outlook /></S.Task>
    <S.Task><OfficeTile letter="W" light="#41a5ee" mid="#2b7cd3" dark="#103f91" box="#185abd" /></S.Task>
    <S.Task><PowerPoint /></S.Task>
    <S.Task><OfficeTile letter="X" light="#33c481" mid="#21a366" dark="#185c37" box="#107c41" /></S.Task>
    <S.Task><OfficeTile letter="P" light="#4bd0c8" mid="#1fa6a0" dark="#037b7b" box="#04686b" /></S.Task>
    <S.Task><OfficeTile letter="N" light="#ca64ea" mid="#c06ae6" dark="#ae4bd5" box="#7719aa" /></S.Task>
    <S.Task><Crossed /></S.Task>
    <S.Task $running><Badge /></S.Task>
    <S.Task $running><Cube /></S.Task>
    <S.Tray>
      <S.Weather>
        <Icon w={24} h={24}>
          <g stroke="none">
            <path d="M5 23a5 5 0 0 1-.5-10C5 7 13 6 15.500 11c5-1 8.500 2 8.500 6 0 3.500-2 6-5 6z" fill="#c9dcf7" />
            <circle cx="18" cy="6" r="5.800" fill="#cf2f26" />
            <text x="18" y="9.500" textAnchor="middle" fontSize="9.500" fill="#fff">1</text>
          </g>
        </Icon>
        <span>18°C</span>
        <span>Mostly cloudy</span>
      </S.Weather>
      <S.TrayIcons>
        <Icon w={12} h={8} s="#fff"><path d="M.5 7 6 1.500 11.500 7" /></Icon>
        <Icon w={14} s="#e6eaf0" sw={1.2}>
          <path d="M1.500 13C1.500 6 6 1.500 13 1.500M4.500 13c0-5 3.500-8.500 8.500-8.500M7.500 13c0-3.500 2-5.500 5.500-5.500" />
          <circle cx="11.500" cy="11.700" r="1.600" fill="#fff" stroke="none" />
        </Icon>
        <Icon w={16} h={14} s="#fff" sw={1.2}>
          <path d="M.5 4.500H3L7 1v12L3 9.500H.5zM9 4.500q1.500 2.500 0 5" />
          <path d="M11.500 2.500q3 4.500 0 9M14 1q4 6 0 12" stroke="#8390a0" />
        </Icon>
      </S.TrayIcons>
      <S.Clock>
        <div>12:22</div>
        <div>16/07/2024</div>
      </S.Clock>
      <S.Notice>
        <Icon w={26} h={24}>
          <g stroke="none">
            <path d="M0 1h16v12H8l-3 3v-3H0z" fill="#fff" />
            <path d="M3 4h10v1H3zM3 6.700h10v1H3zM3 9.500h6v1H3z" fill="#1a2a42" />
          </g>
          <circle cx="15.500" cy="15.500" r="9" fill="#33373d" stroke="#8b9098" strokeWidth="1" />
          <text x="15.500" y="19.500" textAnchor="middle" fontSize="11" fill="#fff" stroke="none">33</text>
        </Icon>
      </S.Notice>
    </S.Tray>
  </S.Taskbar>
)

const App = () => (
  <S.Window>
    <GlobalStyle />
    <TitleBar />
    <S.Tabs>
      <S.Tab $width={54} $file>File</S.Tab>
      <S.Tab $width={81} $active>Message</S.Tab>
      <S.Tab $width={53}>Help</S.Tab>
      <S.TellMe>
        <Icon w={12} h={17} s="#444">
          <path d="M4 12.500C4 9.500.8 9 .8 5.500a5.200 5.200 0 0 1 10.400 0C11.200 9 8 9.500 8 12.500zM4 14.500h4M4.500 16.500h3" />
        </Icon>
        Tell me what you want to do
      </S.TellMe>
    </S.Tabs>
    <Ribbon />
    <MessageHeader />
    <MessageBody />
    <Taskbar />
  </S.Window>
)

export default App
